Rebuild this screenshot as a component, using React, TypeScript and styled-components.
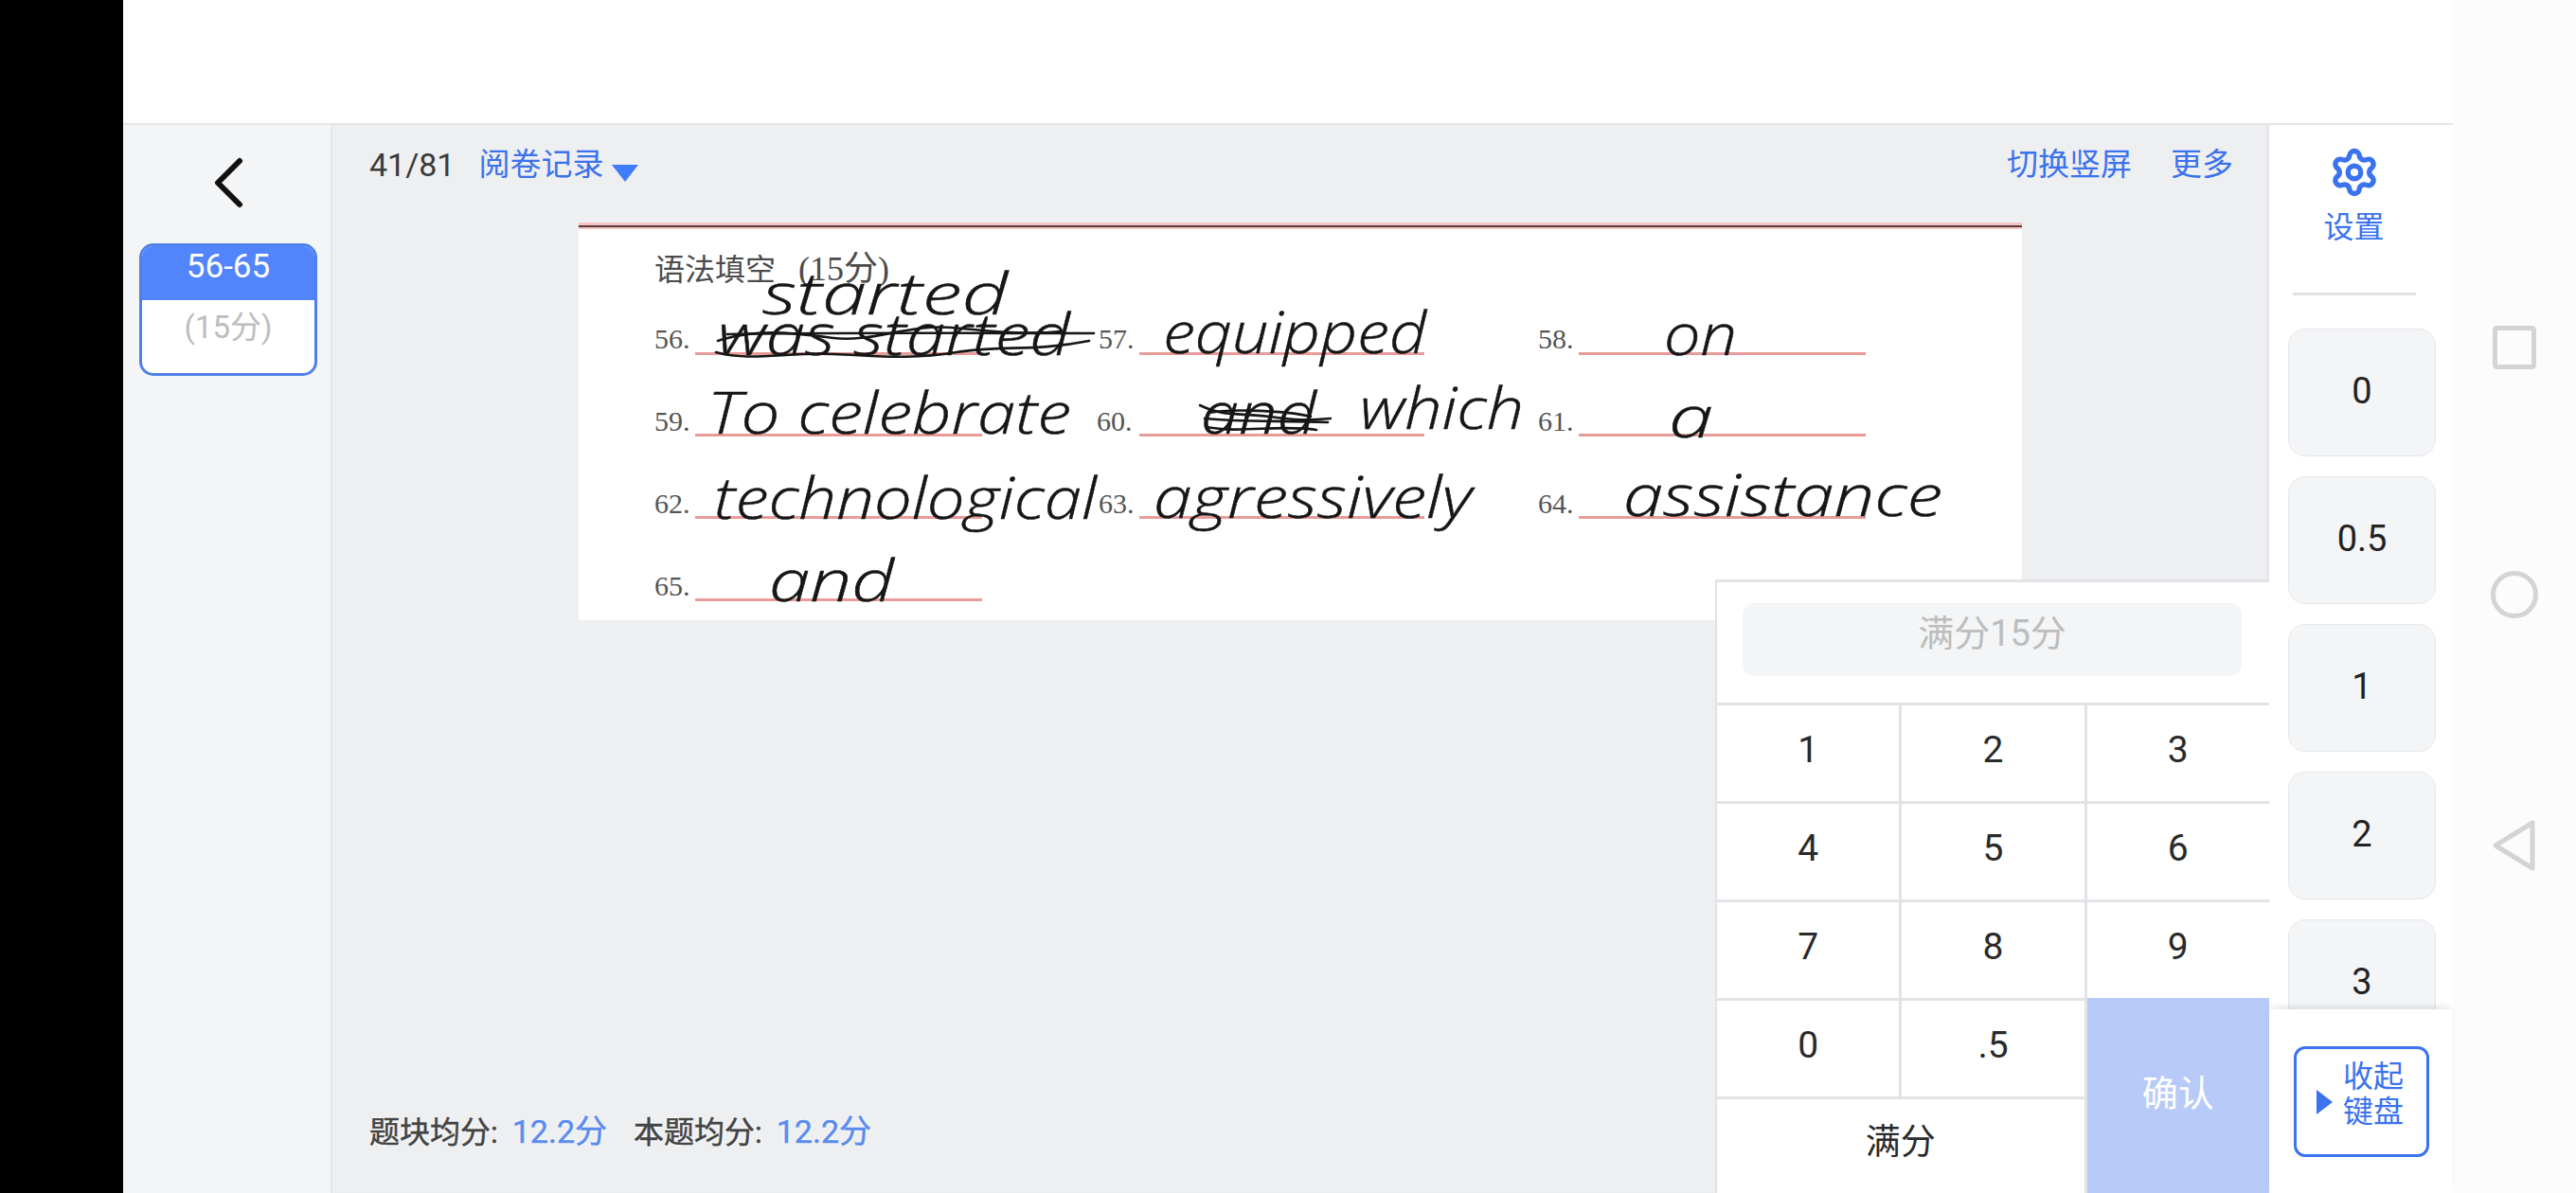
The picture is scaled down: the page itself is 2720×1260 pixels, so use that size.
import React from "react";
import styled, { createGlobalStyle } from "styled-components";
import { Settings } from "lucide-react";

const BLUE = "#3b72ee";
const FONT = `Roboto, "Noto Sans CJK SC", sans-serif`;

const Global = createGlobalStyle`
  html, body { margin: 0; padding: 0; background: #000; }
  body { font-family: ${FONT}; overflow: hidden; }
  * { box-sizing: border-box; }
`;

const Page = styled.div`
  display: flex;
  width: 2720px;
  height: 1260px;
  overflow: hidden;
  background: #000;
`;
const BlackStrip = styled.div`
  flex: 0 0 130px;
  background: #000;
`;
const AppFrame = styled.div`
  flex: 0 0 2460px;
  display: flex;
  flex-direction: column;
  background: #fff;
`;
const TopBar = styled.div`
  flex: 0 0 132px;
  background: #fff;
  border-bottom: 2px solid #e4e5e8;
`;
const Body = styled.div`
  flex: 1;
  min-height: 0;
  display: flex;
  position: relative;
`;

/* Left sidebar */
const Sidebar = styled.aside`
  flex: 0 0 221px;
  display: flex;
  flex-direction: column;
  align-items: center;
  padding-top: 31px;
  background: #f4f5f7;
  border-right: 2px solid #e4e5e8;
`;
const BackIcon = styled.svg`
  width: 40px;
  height: 60px;
  margin-bottom: 34px;
`;
const BlockCard = styled.div`
  width: 188px;
  height: 140px;
  margin-left: 3px;
  border: 3px solid #4f80e8;
  border-radius: 15px;
  overflow: hidden;
  background: #fff;
`;
const BlockHead = styled.div`
  height: 57px;
  background: #5285fb;
  border-radius: 9px 9px 0 0;
  color: #fff;
  font-size: 35px;
  line-height: 43px;
  text-align: center;
`;
const BlockScore = styled.div`
  padding-top: 6px;
  color: #bdbdbd;
  font-size: 33px;
  line-height: 46px;
  text-align: center;
`;

/* Main */
const Main = styled.main`
  flex: 1;
  min-width: 0;
  display: flex;
  flex-direction: column;
  background: #eeeff1;
  box-shadow: inset -4px 0 4px -3px #d9dadd;
`;
const Header = styled.div`
  flex: 0 0 103px;
  display: flex;
  align-items: flex-start;
  padding: 20px 38px 0 39px;
  font-size: 33px;
  line-height: 44px;
`;
const Count = styled.span`
  color: #3a3a3a;
  font-size: 34px;
  margin-right: 25px;
`;
const HeaderLink = styled.span`
  color: ${BLUE};
  & + & {
    margin-left: 41px;
  }
`;
const Caret = styled.span`
  width: 0;
  height: 0;
  margin: 22px 0 0 9px;
  border-left: 14px solid transparent;
  border-right: 14px solid transparent;
  border-top: 18px solid #3f7dfb;
`;
const Spacer = styled.div`
  flex: 1;
`;
const Sheet = styled.svg`
  display: block;
  flex: 0 0 420px;
  width: 1524px;
  height: 420px;
  margin-left: 260px;
  background: #fff;
`;
const Stats = styled.div`
  margin-top: auto;
  padding: 0 0 42px 39px;
  font-size: 32px;
  line-height: 44px;
  color: #444;
  -webkit-text-stroke: 0.5px currentColor;
  text-shadow: 0 0 3px #fff, 0 0 3px #fff;
  white-space: nowrap;
`;
const StatValue = styled.span`
  color: #5a8cf0;
  font-size: 34px;
  margin: 0 28px 0 7px;
`;

/* Keypad overlay */
const Keypad = styled.div`
  position: absolute;
  right: 194px;
  bottom: 0;
  width: 585px;
  height: 648px;
  display: flex;
  flex-direction: column;
  background: #fff;
  border-top: 3px solid #e2e3e6;
  border-left: 2px solid #e2e3e6;
`;
const ScoreInputWrap = styled.div`
  flex: 0 0 127px;
  padding: 22px 29px 28px 27px;
`;
const ScoreInput = styled.div`
  height: 77px;
  padding-bottom: 21px;
  display: flex;
  align-items: center;
  justify-content: center;
  background: #f4f5f7;
  border-radius: 12px;
  color: #bdbdbd;
  font-size: 38px;
`;
const KeyGrid = styled.div`
  flex: 1;
  display: grid;
  grid-template-columns: repeat(3, 1fr);
  grid-template-rows: repeat(4, 101px) 1fr;
  gap: 3px;
  padding-top: 3px;
  background: #e2e3e6;
`;
const Key = styled.div<{ $wide?: boolean }>`
  grid-column: ${(p) => (p.$wide ? "span 2" : "auto")};
  display: flex;
  align-items: center;
  justify-content: center;
  padding-bottom: ${(p) => (p.$wide ? "16px" : "8px")};
  background: #fff;
  color: #2a2a2a;
  font-size: ${(p) => (p.$wide ? "37px" : "39px")};
`;
const ConfirmKey = styled.div`
  grid-column: 3;
  grid-row: 4 / span 2;
  margin-top: -3px;
  display: flex;
  align-items: center;
  justify-content: center;
  padding-bottom: 12px;
  background: #b8cbf8;
  color: #fff;
  font-size: 38px;
`;

/* Right column */
const RightCol = styled.aside`
  flex: 0 0 194px;
  display: flex;
  flex-direction: column;
  background: #fff;
`;
const ScoreScroll = styled.div`
  flex: 1;
  min-height: 0;
  overflow: hidden;
  display: flex;
  flex-direction: column;
`;
const SettingsBox = styled.div`
  flex: 0 0 215px;
  display: flex;
  flex-direction: column;
  align-items: center;
  padding: 23px 15px 0 0;
  color: ${BLUE};
  font-size: 32px;
  line-height: 44px;
`;
const SettingsLabel = styled.span`
  margin-top: 9px;
`;
const SettingsRule = styled.div`
  flex: 0 0 3px;
  width: 130px;
  margin-top: 47px;
  background: #e1e2e5;
`;
const ScoreButton = styled.div`
  flex: 0 0 135px;
  width: 156px;
  margin: 0 0 21px 20px;
  display: flex;
  align-items: center;
  justify-content: center;
  padding-bottom: 4px;
  background: #f4f5f7;
  border: 1px solid #e6e7ea;
  border-radius: 18px;
  color: #222;
  font-size: 38px;
`;
const Footer = styled.div`
  flex: 0 0 194px;
  position: relative;
  display: flex;
  padding: 39px 0 0 26px;
  background: #fff;
  box-shadow: 0 -5px 8px -3px rgba(0, 0, 0, 0.12);
`;
const CollapseButton = styled.div`
  width: 143px;
  height: 117px;
  display: flex;
  align-items: center;
  padding-left: 21px;
  border: 3px solid ${BLUE};
  border-radius: 12px;
  color: ${BLUE};
  font-size: 32px;
  line-height: 37px;
`;
const CollapseCaret = styled.span`
  width: 0;
  height: 0;
  margin: 0 11px 0 0;
  border-top: 13px solid transparent;
  border-bottom: 13px solid transparent;
  border-left: 17px solid ${BLUE};
`;
const CollapseLabel = styled.span`
  width: 64px;
  padding-bottom: 16px;
  text-align: center;
`;

/* Android navigation */
const NavBar = styled.nav`
  flex: 0 0 130px;
  display: flex;
  flex-direction: column;
  align-items: center;
  gap: 213px;
  padding: 344px 0 0 0;
  background: #fcfcfc;
`;
const NavIcon = styled.svg`
  display: block;
  fill: none;
  stroke: #d4d4d4;
  stroke-width: 5;
  stroke-linejoin: round;
`;

/* Scan text */
const PrintLabel = styled.text`
  font-family: "Liberation Serif", serif;
  font-size: 30px;
  fill: #555;
`;
const PrintTitle = styled.text`
  font-family: "Liberation Serif", "Noto Sans CJK SC", serif;
  font-size: 32px;
  fill: #4c4c4c;
`;
const PrintScore = styled.tspan`
  font-size: 36px;
`;
const Hand = styled.text`
  font-family: "Open Sans", sans-serif;
  font-style: italic;
  font-weight: 300;
  font-size: 60px;
  fill: #161616;
  stroke: #161616;
  stroke-width: 0.5;
`;

const labels: [string, number, number][] = [
  ["56.", 691, 368], ["57.", 1160, 368], ["58.", 1624, 368],
  ["59.", 691, 455], ["60.", 1158, 455], ["61.", 1624, 455],
  ["62.", 691, 542], ["63.", 1160, 542], ["64.", 1624, 542],
  ["65.", 691, 629],
];
const underlines: [number, number, number][] = [
  [734, 1037, 373], [1203, 1504, 373], [1667, 1970, 373],
  [734, 1037, 459], [1203, 1504, 459], [1667, 1970, 459],
  [734, 1037, 546], [1203, 1504, 546], [1667, 1970, 546],
  [734, 1037, 633],
];
const writing: [string, number, number, number][] = [
  ["started", 805, 332, 259],
  ["was started", 758, 375, 372],
  ["equipped", 1228, 373, 278],
  ["on", 1757, 375, 77],
  ["To celebrate", 747, 458, 384],
  ["and", 1268, 458, 122],
  ["which", 1436, 453, 173],
  ["a", 1762, 462, 47],
  ["technological", 754, 548, 404],
  ["agressively", 1218, 547, 336],
  ["assistance", 1714, 545, 337],
  ["and", 812, 635, 132],
];

const keys = ["1", "2", "3", "4", "5", "6", "7", "8", "9", "0", ".5"];

export default function App() {
  return (
    <Page>
      <Global />
      <BlackStrip />
      <AppFrame>
        <TopBar />
        <Body>
          <Sidebar>
            <BackIcon viewBox="0 0 40 60" fill="none" stroke="#111" strokeWidth="6" strokeLinecap="round" strokeLinejoin="round">
              <path d="M33 7 L10 30 L33 53" />
            </BackIcon>
            <BlockCard>
              <BlockHead>56-65</BlockHead>
              <BlockScore>(15分)</BlockScore>
            </BlockCard>
          </Sidebar>
          <Main>
            <Header>
              <Count>41/81</Count>
              <HeaderLink>阅卷记录</HeaderLink>
              <Caret />
              <Spacer />
              <HeaderLink>切换竖屏</HeaderLink>
              <HeaderLink>更多</HeaderLink>
            </Header>
            <Sheet viewBox="611 235 1524 420">
              <rect x="611" y="235" width="1524" height="7" fill="#f6c4c4" />
              <rect x="611" y="238" width="1524" height="2" fill="#5a3a3a" />
              <PrintTitle x="691" y="296">语法填空<PrintScore x="843">(15分)</PrintScore></PrintTitle>
              {underlines.map(([a, b, y]) => (
                <rect key={`${a}-${y}`} x={a} y={y - 1} width={b - a} height="3" fill="#e89c9a" />
              ))}
              {labels.map(([t, x, y]) => (
                <PrintLabel key={t} x={x} y={y}>{t}</PrintLabel>
              ))}
              {writing.map(([t, x, y, w]) => (
                <Hand key={`${t}-${y}`} x={x} y={y} textLength={w} lengthAdjust="spacingAndGlyphs">{t}</Hand>
              ))}
              <g fill="none" stroke="#161616" strokeWidth="2.6" strokeLinecap="round">
                <path d="M758 360 C800 346 840 352 880 357 S960 342 1005 346 S1085 354 1120 350" />
                <path d="M768 353 C860 351 1040 352 1155 352" />
                <path d="M756 372 C790 382 830 372 880 374 S960 380 1010 372 S1090 372 1150 360" />
                <path d="M1267 428 C1290 440 1310 436 1340 440 S1380 444 1405 442" />
                <path d="M1272 442 C1310 446 1350 444 1402 446" />
                <path d="M1274 451 C1310 458 1350 448 1390 454" />
                <path d="M1276 436 C1300 431 1360 434 1384 440" />
              </g>
            </Sheet>
            <Stats>
              题块均分: <StatValue>12.2分</StatValue>本题均分: <StatValue>12.2分</StatValue>
            </Stats>
          </Main>
          <Keypad>
            <ScoreInputWrap>
              <ScoreInput>满分15分</ScoreInput>
            </ScoreInputWrap>
            <KeyGrid>
              {keys.map((k) => (
                <Key key={k}>{k}</Key>
              ))}
              <ConfirmKey>确认</ConfirmKey>
              <Key $wide>满分</Key>
            </KeyGrid>
          </Keypad>
          <RightCol>
            <ScoreScroll>
              <SettingsBox>
                <Settings size={54} strokeWidth={2.4} />
                <SettingsLabel>设置</SettingsLabel>
                <SettingsRule />
              </SettingsBox>
              {["0", "0.5", "1", "2", "3"].map((s) => (
                <ScoreButton key={s}>{s}</ScoreButton>
              ))}
            </ScoreScroll>
            <Footer>
              <CollapseButton>
                <CollapseCaret />
                <CollapseLabel>收起键盘</CollapseLabel>
              </CollapseButton>
            </Footer>
          </RightCol>
        </Body>
      </AppFrame>
      <NavBar>
        <NavIcon width="46" height="46" viewBox="0 0 46 46"><rect x="2.5" y="2.5" width="41" height="41" rx="2" /></NavIcon>
        <NavIcon width="50" height="50" viewBox="0 0 50 50"><circle cx="25" cy="25" r="22.5" /></NavIcon>
        <NavIcon width="46" height="54" viewBox="0 0 46 54"><path d="M3 27 L42 3 V51 Z" /></NavIcon>
      </NavBar>
    </Page>
  );
}
